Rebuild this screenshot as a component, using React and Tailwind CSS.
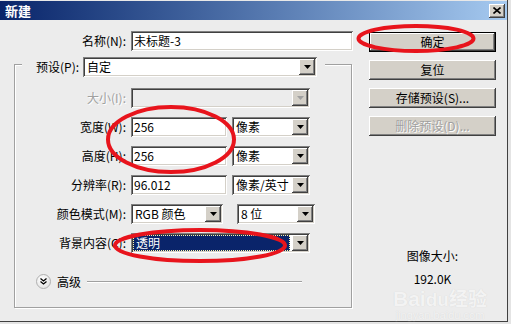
import React from 'react';

const sunken = 'shadow-[inset_1px_1px_0_#808080,inset_-1px_-1px_0_#ffffff,inset_2px_2px_0_#404040,inset_-2px_-2px_0_#d4d0c8]';
const raised = 'shadow-[inset_-1px_-1px_0_#404040,inset_1px_1px_0_#ffffff,inset_-2px_-2px_0_#808080,inset_2px_2px_0_#d4d0c8]';

const Arrow = ({ disabled }) => (
  <div className={`w-[16px] h-[16px] m-[2px] shrink-0 bg-[#d4d0c8] flex items-center justify-center ${raised}`}>
    <svg width="7" height="4" viewBox="0 0 7 4">
      <path d="M0 0h7L3.5 4z" fill={disabled ? '#a0a0a0' : '#000'} />
    </svg>
  </div>
);

const Select = ({ w, value, disabled, selected }) => (
  <div className={`${w} h-[20px] flex ${sunken} ${disabled ? 'bg-[#ececec]' : 'bg-white'}`}>
    {selected ? (
      <div className="flex-1 m-[2px] mr-0 bg-[#0a246a] border border-dotted border-[#fff6a8] flex items-center pl-[2px] text-white">
        {value}
      </div>
    ) : (
      <div className="flex-1 flex items-center pl-[4px] whitespace-nowrap overflow-hidden">{value}</div>
    )}
    <Arrow disabled={disabled} />
  </div>
);

const Input = ({ w, value }) => (
  <div className={`${w} h-[20px] bg-white flex items-center pl-[3px] ${sunken}`}>{value}</div>
);

const Row = ({ label, disabled, children }) => (
  <div className="flex items-center h-[20px]">
    <div
      className={`w-[111px] text-right ${disabled ? 'text-[#a0a0a0] [text-shadow:1px_1px_0_#ffffff]' : ''}`}
    >
      {label}
    </div>
    <div className="ml-[5px] flex gap-[5px]">{children}</div>
  </div>
);

const Button = ({ children, isDefault, disabled }) => (
  <div
    className={`h-[20px] flex items-center justify-center bg-[#d4d0c8] ${
      isDefault ? 'border border-black' : ''
    } ${raised} ${disabled ? 'text-[#a0a0a0] [text-shadow:1px_1px_0_#ffffff]' : ''}`}
  >
    {children}
  </div>
);

export default function App() {
  return (
    <div className="w-[511px] h-[324px] relative overflow-hidden bg-[#e4e4e4] text-[12px] leading-none text-black font-['Noto_Sans_CJK_SC',sans-serif]">
      <div className="w-[508px] h-[322px] bg-[#ececec] border-r border-b border-[#404040] flex flex-col">
        {/* title bar */}
        <div className="h-[20px] border-t border-[#e8e8e8] bg-gradient-to-r from-[#0a246a] to-[#a6caf0] flex items-center pl-[5px] pr-[2px]">
          <span className="text-white font-bold text-[13px]">新建</span>
          <div className={`ml-auto w-[16px] h-[14px] bg-[#d4d0c8] flex items-center justify-center ${raised}`}>
            <svg width="8" height="7" viewBox="0 0 8 7">
              <path d="M0.5 0.5l7 6M7.5 0.5l-7 6" stroke="#000" strokeWidth="1.6" />
            </svg>
          </div>
        </div>

        <div className="flex-1 flex">
          {/* left part */}
          <div className="w-[353px] flex flex-col">
            <div className="mt-[11px] flex items-center">
              <div className="w-[131px] pr-[5px] text-right">名称(N):</div>
              <Input w="w-[222px]" value="未标题-3" />
            </div>

            <div className="ml-[14px] mt-[13px] w-[338px] h-[244px] border border-[#a0a0a0] shadow-[inset_1px_1px_0_#ffffff,1px_1px_0_#ffffff] flex flex-col">
              <div className="-mt-[8px] ml-[7px] self-start bg-[#ececec] pl-[14px] pr-[8px] flex items-center gap-[4px]">
                <span>预设(P):</span>
                <Select w="w-[234px]" value="自定" />
              </div>

              <div className="mt-[11px] flex flex-col gap-[9px]">
                <Row label="大小(I):" disabled>
                  <Select w="w-[179px]" value="" disabled />
                </Row>
                <Row label="宽度(W):">
                  <Input w="w-[96px]" value="256" />
                  <Select w="w-[78px]" value="像素" />
                </Row>
                <Row label="高度(H):">
                  <Input w="w-[96px]" value="256" />
                  <Select w="w-[78px]" value="像素" />
                </Row>
                <Row label="分辨率(R):">
                  <Input w="w-[96px]" value="96.012" />
                  <Select w="w-[78px]" value="像素/英寸" />
                </Row>
                <Row label="颜色模式(M):">
                  <Select w="w-[92px]" value="RGB 颜色" />
                  <div className="w-[4px]" />
                  <Select w="w-[78px]" value="8 位" />
                </Row>
                <Row label="背景内容(C):">
                  <Select w="w-[179px]" value="透明" selected />
                </Row>
              </div>

              <div className="mt-[21px] ml-[21px] flex items-center">
                <div className="w-[15px] h-[15px] rounded-full border border-[#b0b0b0] bg-[radial-gradient(circle_at_40%_35%,#ffffff,#dcdcdc)] flex items-center justify-center">
                  <svg width="7" height="7" viewBox="0 0 7 7">
                    <path d="M0.5 0.5l3 2.5 3-2.5M0.5 3.5l3 2.5 3-2.5" stroke="#000" strokeWidth="1.3" fill="none" />
                  </svg>
                </div>
                <span className="ml-[6px]">高级</span>
                <div className="ml-[6px] mr-[49px] flex-1 h-[2px] border-t border-[#a0a0a0] border-b border-b-white" />
              </div>
            </div>
          </div>

          {/* right part */}
          <div className="ml-[16px] w-[127px] flex flex-col">
            <div className="mt-[12px] flex flex-col gap-[8px]">
              <Button isDefault>确定</Button>
              <Button>复位</Button>
              <Button>存储预设(S)...</Button>
              <Button disabled>删除预设(D)...</Button>
            </div>
            <div className="mt-[112px] h-[16px] flex items-center justify-center">图像大小:</div>
            <div className="mt-[7px] h-[16px] flex items-center justify-center">192.0K</div>
          </div>
        </div>
      </div>

      {/* watermark */}
      <div className="absolute left-[393px] top-[288px] flex flex-col items-center text-[#f3f3f3] [text-shadow:0_0_1px_#d2d2d2] pointer-events-none">
        <div className="text-[21px] font-bold leading-none font-['Liberation_Sans',sans-serif]">
          Bai<span className="text-[19px]">du</span>
          <span className="font-['Noto_Sans_CJK_SC',sans-serif] text-[19px]">经验</span>
        </div>
        <div className="text-[11px] mt-[1px] leading-none font-['Liberation_Sans',sans-serif]">jingyan.baidu.com</div>
      </div>

      {/* red annotations */}
      <svg className="absolute left-0 top-0 pointer-events-none" width="511" height="324" viewBox="0 0 511 324">
        <g fill="none" stroke="#e8141c" strokeWidth="4">
          <ellipse cx="416" cy="38.5" rx="57.5" ry="12.5" />
          <ellipse cx="171" cy="139.5" rx="63" ry="32.5" />
          <ellipse cx="200" cy="245.5" rx="85" ry="15.5" />
        </g>
      </svg>
    </div>
  );
}
